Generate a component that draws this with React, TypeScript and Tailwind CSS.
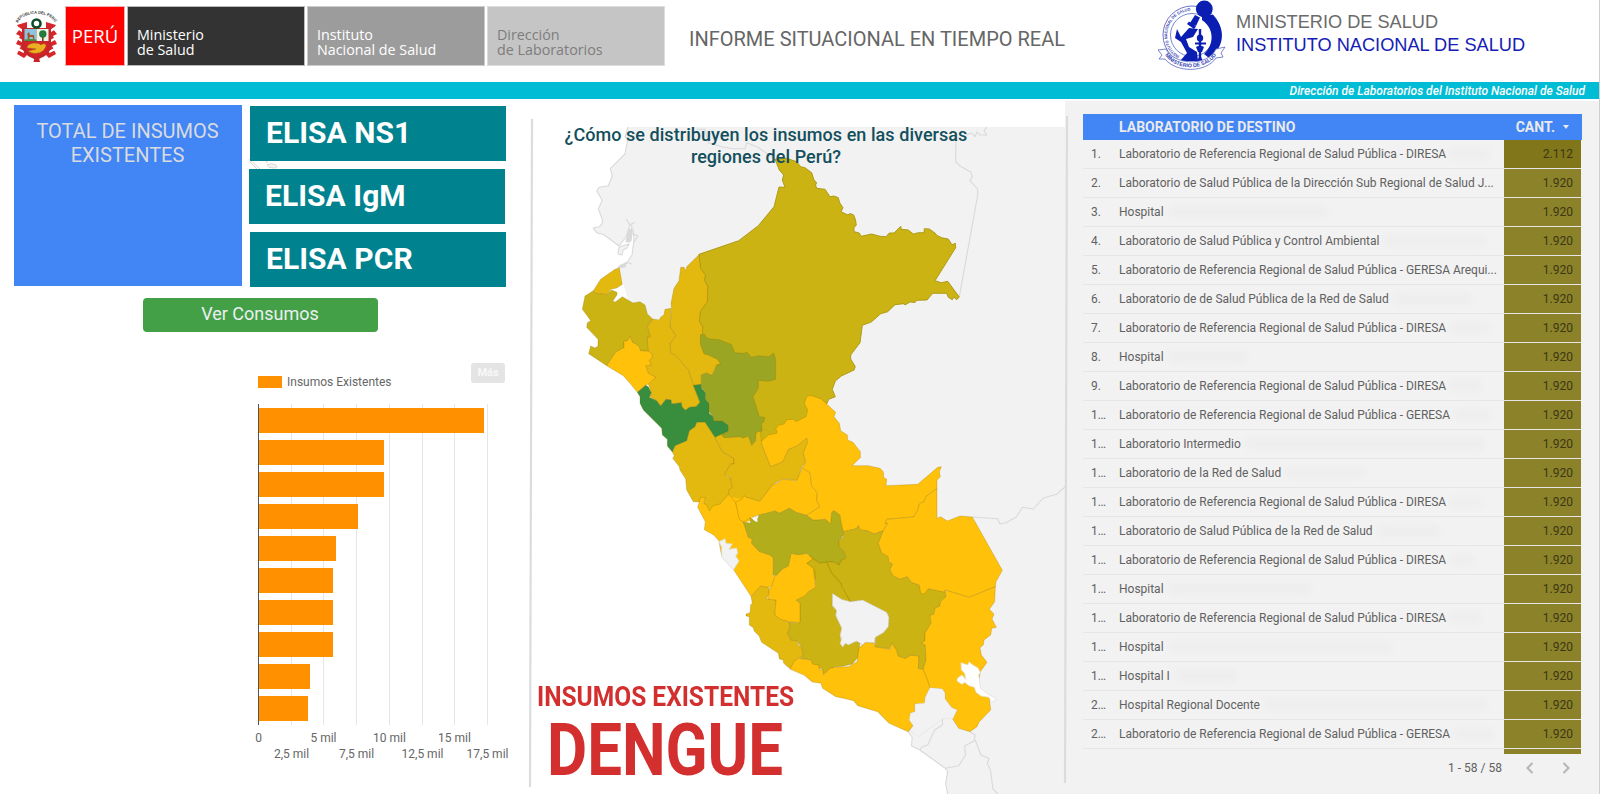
import React from "react";

const AMBER = "#e4b90f";
const YELLOW = "#ffc10a";
const OLIVE = "#cbb314";
const MOSS = "#9aa523";
const JUNIN = "#b2ae1b";
const GREEN = "#388e3c";
const LAND = "#f2f2f2";

type Region = { fill: string; points: string };

const coastSouth: Region[] = [
  { fill: AMBER, points: "333,409 362,378 385,382 388,400 380,416 408,420 405,465 447,487 450,500 443,520 453,540 470,542 475,555 485,562 490,588 470,597 452,627 440,618 430,608 430,600 418,597 415,580 405,573 365,547 357,527 343,514 340,503 328,495 328,470 318,468 318,462 330,458 332,434 337,430" },
  { fill: YELLOW, points: "266,103 287,127 300,178 310,186 325,232 337,237 335,250 357,274 390,285 400,294 400,345 405,352 396,378 385,382 362,378 333,409 278,325 245,288 240,262 237,243 222,226 193,209 196,185 173,142 182,112 197,112 190,130 200,135 208,153 220,137 240,132" },
  { fill: YELLOW, points: "287,127 305,118 312,107 322,113 360,124 397,75 412,70 428,58 470,62 488,23 510,38 515,78 532,98 530,122 540,140 500,166 470,158 448,145 418,160 405,153 380,160 355,165 332,173 310,186 298,178" },
  { fill: OLIVE, points: "480,488 480,430 468,420 505,395 527,382 525,330 500,310 518,297 540,309 560,306 575,340 603,372 632,427 610,422 578,400 576,438 588,450 587,470 605,505 600,530 607,562 620,548 660,545 655,590 637,612 610,618 585,620 550,642 545,625 530,630 515,614 515,600 480,595 490,585 485,562 470,542 453,540 443,520 450,500 447,487" },
  { fill: YELLOW, points: "453,280 475,284 500,280 518,297 500,310 520,325 527,382 505,395 495,408 468,420 480,430 480,488 447,485 422,478 405,465 408,420 385,418 388,385 396,378 405,350 428,326 445,318" },
  { fill: JUNIN, points: "310,186 332,190 330,173 350,186 357,165 380,160 405,153 418,160 448,145 470,158 500,166 520,180 557,178 572,190 575,155 583,152 602,165 603,188 612,195 610,225 597,245 597,260 610,272 619,292 602,300 597,316 580,304 540,309 500,280 475,284 453,280 445,318 428,326 408,347 400,345 400,294 390,285 357,274 335,250 337,237 325,232" },
];

const north: Region[] = [
  { fill: AMBER, points: "417,44 421,85 436,105 433,122 443,138 442,185 420,215 418,245 428,260 427,283 440,300 482,345 482,372 470,375 462,395 455,406 440,399 424,405 424,433 400,436 385,390 345,345 332,340 330,310 347,287 330,260 335,207 333,190 342,145 357,122 362,82 372,82 378,92 380,80" },
  { fill: AMBER, points: "333,205 315,208 312,224 302,232 297,240 278,237 262,260 271,290 261,292 263,332 277,342 277,352 268,360 273,375 257,377 265,400 287,412 272,425 265,432 274,458 270,470 290,482 302,498 318,478 333,480 335,492 364,488 366,500 376,511 388,502 408,500 420,487 400,436 385,390 345,345 332,340 330,310 347,287 330,260" },
  { fill: AMBER, points: "178,84 165,88 122,118 100,152 108,160 140,164 152,148 170,144 187,133" },
  { fill: OLIVE, points: "100,152 75,168 67,208 82,228 92,242 82,248 80,262 114,298 114,318 105,324 92,318 86,341 140,377 168,336 192,323 192,304 203,302 210,290 218,308 227,312 237,320 241,332 265,334 261,292 271,290 262,260 278,237 262,222 255,195 240,185 219,189 187,170 166,186 158,184 171,164 171,157 154,150 140,164 108,160" },
  { fill: YELLOW, points: "140,377 168,336 192,323 192,304 203,302 210,290 218,308 227,312 237,320 241,332 265,334 277,342 277,352 268,360 273,375 257,377 265,400 287,412 272,425 265,432 257,436 232,457 210,430 190,407" },
  { fill: AMBER, points: "337,636 345,617 380,602 388,572 405,560 410,547 435,546 465,592 487,635 522,655 522,672 512,672 494,703 503,712 512,715 517,742 506,750 506,764 483,790 455,812 443,814 430,800 435,774 422,774 420,786 400,785 380,750 377,717 360,690 358,680 338,655 343,648" },
  { fill: AMBER, points: "465,592 505,560 560,565 580,590 600,565 606,615 632,680 668,665 685,628 710,618 740,594 743,605 730,640 737,665 725,683 712,721 668,717 637,735 600,784 562,773 545,778 527,787 506,764 506,750 517,742 512,715 494,703 512,672 522,672 522,655 487,635" },
  { fill: GREEN, points: "232,457 257,436 265,440 274,458 268,472 290,482 302,498 318,478 333,480 335,492 364,488 366,500 376,511 388,502 408,500 420,487 400,436 424,433 425,445 437,458 437,478 447,490 447,520 460,530 462,543 488,543 505,555 505,574 465,592 435,546 410,547 405,560 388,572 380,602 345,617 337,636 322,618 322,598 307,585 305,565 250,510 240,490 240,470" },
  { fill: MOSS, points: "421,284 433,283 442,294 450,297 478,299 515,314 524,338 553,340 560,336 574,352 597,347 627,350 641,339 647,358 647,418 625,424 595,421 595,445 579,470 598,530 614,532 612,545 604,550 607,573 588,576 587,602 575,616 565,588 548,595 542,590 492,593 485,585 505,574 505,555 488,543 462,543 460,530 447,515 447,490 437,478 437,458 424,440 424,405 440,399 455,406 462,395 470,375 482,372 472,358 445,345 432,342 421,313" },
];

const arequipa: Region[] = [
  { fill: YELLOW, points: "755,147 768,122 780,115 815,120 822,133 838,135 842,150 852,150 852,165 870,145 900,140 925,140 950,125 955,85 968,73 975,66 1000,70 1003,80 1045,88 1050,68 1065,90 1070,108 1090,115 1105,105 1130,108 1128,145 1142,148 1155,180 1162,203 1148,232 1146,250 1118,252 1118,275 1105,280 1102,300 1113,317 1098,335 1043,310 1010,275 952,257 940,242 910,235 888,230 850,205 845,190 820,186 797,166" },
];

const east: Region[] = [
  { fill: YELLOW, points: "-174,195 -177,185 -155,165 -130,160 -130,150 -134,148 -125,136 -108,132 -100,119 -80,118 -72,125 -42,110 -37,90 -47,70 -40,50 -30,46 2,56 20,72 47,97 42,110 58,130 62,152 82,165 83,180 99,187 121,215 121,233 96,257 145,257 180,265 190,275 191,293 200,297 198,317 293,313 353,262 364,260 358,275 361,290 351,300 351,325 318,350 312,365 298,372 293,392 280,411 200,418 196,430 203,430 190,452 163,462 140,452 120,450 115,437 110,446 70,455 63,425 60,405 43,392 35,395 32,432 17,418 -20,420 -40,406 0,380 -10,362 -8,338 -25,318 -30,278 -52,265 -43,245 -50,220 -37,185 -40,174 -70,198 -95,208 -112,245 -148,260" },
  { fill: OLIVE, points: "70,455 110,446 115,437 120,450 140,452 163,462 190,452 175,490 185,518 205,530 206,545 218,552 210,570 220,588 240,597 262,590 275,607 298,615 305,642 325,626 375,635 378,650 362,664 360,678 345,685 342,703 330,705 333,730 315,760 315,782 305,790 316,795 318,840 310,868 295,865 297,828 271,825 256,835 235,828 230,810 215,788 208,806 166,800 166,772 190,758 205,740 207,712 200,697 128,660 92,665 65,620 65,610 35,578 20,545 45,547 57,556 62,545 79,532 70,512 57,500 57,485 70,470" },
  { fill: YELLOW, points: "200,418 280,411 293,392 298,372 312,365 318,350 351,325 351,415 362,410 382,423 420,408 457,411 547,571 528,605 526,620 448,652 375,630 372,636 325,626 313,642 302,640 298,615 275,607 262,590 240,597 220,588 210,570 218,552 206,545 205,530 185,518 175,490 190,452 203,430 196,430" },
  { fill: YELLOW, points: "375,630 448,652 526,620 524,665 508,688 522,702 516,717 529,742 515,745 512,765 492,780 490,795 480,803 484,825 501,847 481,875 473,920 488,945 509,945 509,965 512,990 478,1025 471,1040 450,1055 416,1045 398,1017 411,990 395,983 375,957 375,940 367,927 330,923 323,900 310,868 318,840 316,795 305,790 315,782 315,760 333,730 330,705 342,703 345,685 360,678 362,664 378,650" },
];

const LORETO =
  "775,159.3 779.3,170 783.7,175 782.3,180 785,187.3 779,187 774,206.7 758.3,225.7 738.7,240.7 699,254.3 700.3,268.3 705.3,275 704.3,280.7 707.7,286 707.3,301.7 700,311.7 699.3,321.7 702.7,326.7 702.3,334.3 730,400 761,441.7 790,434 826.7,404 828.7,399.3 835.3,396.7 832.3,389.3 835.3,381 841.3,376 854,370 855.3,366.7 850.7,359 850.7,355 860,342.7 862.3,325.3 871.3,322 880.7,313.7 887.7,311.7 895,304.7 904,303.7 905,305 910,302 915,302.5 916.7,300.3 927,300 932.7,293.3 946.7,293.3 948.3,297.3 952.3,299.7 953.7,297 956.7,299.7 959.3,297 947.7,281.3 941.3,282.7 935,280.7 955.7,247.7 955.3,243.3 952,244.7 948.3,239 941.7,237.7 936.7,235.3 935,233 929.3,229 924.3,228.7 924,232.7 918.3,232.7 913.3,234 908.3,230 901.3,229.3 900.7,226.3 894,233 889.3,233 886,236.7 880,236.3 871.7,234 861,236.3 859.3,233 854,231.7 854,227.7 856.3,225 855.5,220 853.7,215 850,213.5 848,215 841,211.7 843,207.7 839.7,202.7 838.3,197.7 834,196 830,196.7 825,189.3 816.7,188.3 815.5,185 816.7,182.7 814,180 811.7,172.7 805,167.7 800.7,166.7 796.7,161.7 786.7,158.3";

function Regions({ items, transform }: { items: Region[]; transform: string }) {
  return (
    <g transform={transform} stroke="#8a6a00" strokeOpacity="0.26" strokeWidth="3" strokeLinejoin="round">
      {items.map((r, i) => (
        <polygon key={i} points={r.points} fill={r.fill} />
      ))}
    </g>
  );
}

function PeruMap() {
  return (
    <svg className="absolute inset-0" width="540" height="695" viewBox="528 99 540 695">
      <g stroke="#d9d9d9" strokeWidth="1.1" strokeLinejoin="round">
        <path
          fill={LAND}
          stroke="none"
          d="M628,127 L625,137 626.7,143 625,154 610.3,168.7 612.3,176 608.3,185.7 599.3,187.3 596.7,191 602.3,200.3 598.3,209 602.3,219 602.3,223.3 599.3,226.7 593,228 596.7,232.7 604,234.7 619,246 626,237 630,225 634,240 632,255 626.7,263.3 619,268 625,290 640,340 660,400 690,470 750,580 800,660 880,700 908.1,731.7 912.2,737.3 911.5,746 919.8,750 945.3,768.3 947.7,771.7 945.6,783.3 947.7,794 1068,794 1068,127Z"
        />
        <path fill="none" d="M628,127 L625,137 628,139 626,148 625,154 610.3,168.7 612.3,176 608.3,185.7 599.3,187.3 596.7,191 602.3,200.3 598.3,209 602.3,219 602.3,223.3 599.3,226.7 593,228 596.7,232.7 604,234.7 619,246 626,237 630,225 626,219 M630,225 L635,222 M632,225 L629,243 M633,228 L634,240 M630,233 L638,236 634,242 M627,236 L631,240 M634,240 L632,255 626.7,263.3 618,267 M625,262 L632,264" />
        <path fill={LAND} d="M619,247 L629,244 627,248 623,250 622,255 618,254Z" />
        <path fill="#d9d9d9" d="M629,229 L632,230 631,241 626,242Z M621,265 L626,263 625,267 618,268Z" />
        <path fill="none" d="M696.7,129.3 L705,129.3 708.3,142.7 721.7,146.7 733,148.7 745,148.7 746.7,142.7 758,147.3 775,159.3" />
        <path fill="none" d="M959.3,297 L977.7,195 977.7,189 970,180.7 972.3,176.7 971,172.3 960,166 955.7,161.7 956,135 M966,135 L971.7,133 975,136.7 977,132 980,135 986.7,135 984,131 986.7,127" />
        <path fill="none" d="M972.3,517 L997.7,518.7 1000,524 1006,522.7 1016,517.3 1022.7,507.3 1033.3,509 1043.3,498 1056.7,494.3 1066,486" />
        <path fill="none" d="M908.1,731.7 L912.2,737.3 911.5,746 919.8,750 945.3,768.3 947.7,771.7 945.6,783.3 947.7,794 M952.8,719 L951,715 942.5,716.5 942.5,725 934.6,730 927.7,745 922.5,746.5 919.8,750 M970,731.7 L975.2,735 974.2,740.7 964.6,746 965.6,755 958.7,765.7 945.3,768.3 M975.2,740 L981,755 989,758.5 987.3,763.3 990.4,770 993,789 998,794" />
      </g>
      <polygon points={LORETO} fill={OLIVE} stroke="#a99510" strokeWidth="0.9" strokeLinejoin="round" />
      <Regions items={north} transform="translate(560 240) scale(.33333)" />
      <g transform="translate(640 460) scale(.33333)">
        <polygon fill={OLIVE} points="495,285 620,295 640,430 600,420 490,330" />
        <polygon fill={YELLOW} points="270,110 330,120 340,180 312,188 296,176" />
      </g>
      <Regions items={coastSouth} transform="translate(640 460) scale(.33333)" />
      <Regions items={arequipa} transform="translate(530 620) scale(.34435 .33333)" />
      <Regions items={east} transform="translate(820 380) scale(.33333)" />
      <g transform="translate(820 380) scale(.33333)" strokeWidth="2">
        <polygon fill={LAND} stroke="#c9c39a" points="37,640 65,658 92,665 128,660 200,697 207,712 205,740 190,758 166,772 163,788 135,787 128,795 110,783 85,795 75,790 68,802 60,790 65,775 60,765 65,745 47,705 50,692 37,675" />
        <polygon fill="#fff" stroke="#dcdcdc" points="423,848 444,855 447,845 455,853 473,863 481,877 476,885 481,925 509,945 530,958 514,967 507,952 483,948 468,937 463,922 447,917 434,907 426,913 411,903 412,895 426,885 437,898 434,880 424,870" />
        <polygon fill={LAND} stroke="#d9d9d9" points="330,923 367,927 375,940 375,957 395,983 411,990 398,1017 370,1015 295,1070 270,1052 280,1037 268,1020 271,1000 285,995 285,972 314,970 316,952" strokeOpacity="0.6" />
      </g>
      <g transform="translate(640 460) scale(.33333)">
        <polygon fill={LAND} stroke="#d9d9d9" strokeWidth="2" points="237,245 255,236 258,250 277,252 267,268 290,264 293,280 287,288 297,303 280,330 262,310 245,292 245,262" />
        <polygon fill="#fff" points="331,170 352,179 353,185 345,184" />
      </g>
      <g stroke="#dcdcdc" strokeWidth="2.2">
        <line x1="532" y1="119" x2="530" y2="787" />
        <line x1="1067" y1="116" x2="1065" y2="783" />
      </g>
    </svg>
  );
}

function PeruCrest() {
  return (
    <svg width="44" height="54" viewBox="14 9 44 54">
      <path id="arch" d="M18,23 C22,10.500 50,10.500 55,23" fill="none" />
      <text fontFamily="Liberation Sans" fontSize="4" fontWeight="700" fill="#333">
        <textPath href="#arch" textLength="43" lengthAdjust="spacingAndGlyphs">REPÚBLICA DEL PERÚ</textPath>
      </text>
      <path d="M17,25 L27,22 27,55 24,58 17,54 21,46 16,44 20,36 16,34 20,29Z" fill="#d7262b" />
      <path d="M56,25 L46,22 46,55 49,58 56,54 52,46 57,44 53,36 57,34 53,29Z" fill="#d7262b" />
      <path d="M18,28 L24,32 M17,38 L24,42 M18,49 L24,52 M55,28 L49,32 M56,38 L49,42 M55,49 L49,52" stroke="#fff" strokeWidth="2.4" />
      <path d="M22,28 L51,28 51,46 C50,55 43,57 36.500,60 C30,57 23,55 22,46Z" fill="#c0282b" />
      <path d="M24.500,29 H36.500 V41 H24.500Z" fill="#8cc4e0" />
      <path d="M36.500,29 H48.500 V41 H36.500Z" fill="#eef3e8" />
      <path d="M24.500,42 H48.500 V47 C47,53 42,55 36.500,57 C31,55 26,53 24.500,47Z" fill="#d5222a" />
      <path d="M27,34 l2,-2 1,3 4,0 .6,5 -1.400,0 -.5,-3 -3,0 -.6,3 -1.300,0 -.3,-5Z" fill="#a3562a" />
      <path d="M24.500,41 v-1.500 q6,-1 12,0 v1.500Z" fill="#4b8d3b" />
      <path d="M42,41 v-6 h1.600 v6Z" fill="#704623" />
      <circle cx="42.800" cy="34" r="3.700" fill="#277a3d" />
      <path d="M27,48 C27,42 39,42 41,45 C44,42 48,45 45,48 C43,54 32,55 28,51 l8,-2Z" fill="#edae21" stroke="#90561b" strokeWidth=".5" />
      <circle cx="36.500" cy="23.500" r="4" fill="#fff" stroke="#0f4a27" strokeWidth="2.600" />
      <path d="M34.500,58 h4.500 l1,4 h-6.500Z" fill="#c9232a" />
    </svg>
  );
}

function InsLogo() {
  return (
    <svg width="70" height="72" viewBox="1158 0 70 72">
      <g fill="none" stroke="#5a64c4">
        <circle cx="1192" cy="35" r="29" strokeWidth=".9" fill="#fff" />
        <circle cx="1192" cy="35" r="21.500" strokeWidth=".8" />
      </g>
      <path id="ring" d="M1179.500,56 A24.200,24.200 0 0 1 1192,10.800 L1195,10.800" fill="none" />
      <text fontFamily="Liberation Sans" fontWeight="700" fontSize="4.200" fill="#3c48b4">
        <textPath href="#ring" textLength="62" lengthAdjust="spacingAndGlyphs">INSTITUTO NACIONAL DE SALUD</textPath>
      </text>
      <path d="M1202,14 L1213,15 C1226,29 1225,47 1209,58 L1204,54 C1214,45 1215,29 1202,20Z" fill="#0a1fb2" />
      <circle cx="1204.300" cy="9" r="8.400" fill="#0a1fb2" />
      <g fill="#0a1fb2">
        <path d="M1195,15 L1200,17.500 1196,26 1190,23Z M1189,21.500 L1196,26.500 1194,29 1187,24Z" />
        <path d="M1177,29 L1181,37 1189,28 1198,29 1193,37 1186,39 1189,47 1197,52 1198,61 1180,61 1187,53 1181,42 1175,38Z" />
        <path d="M1198.800,29 h2.400 v35 h-2.400Z" />
        <ellipse cx="1200" cy="38" rx="3.200" ry="3.600" />
        <path d="M1195,42.500 h11 v2 h-11Z M1196,47 q4,-2.500 8,0 l-2,5 h-4Z M1196,63 l4,-8 4,8Z" />
      </g>
      <path d="M1158,50 L1166,49 C1172,64 1207,68 1216,49 L1225,47 1221,53 1223,57 1216,58 C1206,73 1176,73 1165,59 L1159,59 1162,55Z" fill="#fff" stroke="#5a64c4" strokeWidth=".8" />
      <path id="ribbon" d="M1165,55 C1175,71 1206,72 1217,54" fill="none" />
      <text fontFamily="Liberation Sans" fontWeight="700" fontSize="5.400" fill="#3541b4">
        <textPath href="#ribbon" textLength="59" lengthAdjust="spacingAndGlyphs">MINISTERIO DE SALUD</textPath>
      </text>
    </svg>
  );
}

const bars = [484, 384, 384, 358, 336, 333, 333, 333, 310, 308];
const ticks = [
  { x: 258.5, label: "0" },
  { x: 291.5, label: "2,5 mil" },
  { x: 323.5, label: "5 mil" },
  { x: 356.5, label: "7,5 mil" },
  { x: 389.5, label: "10 mil" },
  { x: 422.5, label: "12,5 mil" },
  { x: 454.5, label: "15 mil" },
  { x: 487.5, label: "17,5 mil" },
];

function SupplyChart() {
  return (
    <svg className="block" width="288" height="376" viewBox="240 394 288 376" fontFamily="Roboto, sans-serif" fontSize="12" fill="#666">
      {ticks.map((t, i) => (
        <g key={t.label}>
          <line x1={t.x} x2={t.x} y1="404" y2="725" stroke="#e6e6e6" />
          <text x={t.x} y={i % 2 ? 758 : 742} textAnchor="middle">{t.label}</text>
        </g>
      ))}
      {bars.map((end, i) => (
        <rect key={i} x="259" y={408 + i * 32} width={end - 259} height="25" fill="#ff9100" />
      ))}
      <line x1="258.500" x2="258.500" y1="404" y2="725" stroke="#555" />
    </svg>
  );
}

const REF = "Laboratorio de Referencia Regional de Salud Pública - ";
const rows: { name: string; smudge?: string }[] = [
  { name: REF + "DIRESA", smudge: "w-10" },
  { name: "Laboratorio de Salud Pública de la Dirección Sub Regional de Salud J..." },
  { name: "Hospital", smudge: "w-40" },
  { name: "Laboratorio de Salud Pública y Control Ambiental", smudge: "w-26" },
  { name: REF + "GERESA Arequi..." },
  { name: "Laboratorio de de Salud Pública de la Red de Salud", smudge: "w-20" },
  { name: REF + "DIRESA", smudge: "w-10" },
  { name: "Hospital", smudge: "w-20" },
  { name: REF + "DIRESA", smudge: "w-8" },
  { name: REF + "GERESA", smudge: "w-9" },
  { name: "Laboratorio Intermedio", smudge: "w-60" },
  { name: "Laboratorio de la Red de Salud", smudge: "w-20" },
  { name: REF + "DIRESA", smudge: "w-8" },
  { name: "Laboratorio de Salud Pública de la Red de Salud", smudge: "w-16" },
  { name: REF + "DIRESA", smudge: "w-6" },
  { name: "Hospital", smudge: "w-36" },
  { name: REF + "DIRESA", smudge: "w-8" },
  { name: "Hospital", smudge: "w-56" },
  { name: "Hospital I", smudge: "w-16" },
  { name: "Hospital Regional Docente", smudge: "w-56" },
  { name: REF + "GERESA", smudge: "w-10" },
];

function LabTable() {
  return (
    <div className="ml-[18px] mt-[13px] w-[499px] text-xs text-[#616161]">
      <div className="flex h-[26px] items-center bg-[#4285f4] text-sm font-bold text-[#e8eaed]">
        <span className="ml-[36px] pb-px tracking-[0.02px]">LABORATORIO DE DESTINO</span>
        <span className="ml-auto pb-px">CANT.</span>
        <span className="ml-[8px] mr-[13px] h-0 w-0 border-x-[3px] border-t-[4px] border-x-transparent border-t-[#e8eaed]" />
      </div>
      {rows.map((r, i) => (
        <div key={i} className="flex h-[29px] w-[498px] border-b border-[#e6e6e6] leading-[28px]">
          <span className="w-[36px] pl-[8px]">
            {i < 9 ? `${i + 1}.` : <>{i < 19 ? "1" : "2"}<span className="tracking-[-0.5px]">...</span></>}
          </span>
          <span className="flex flex-1 items-center whitespace-nowrap tracking-[-0.01px]">
            {r.name}
            {r.smudge && <span className={`${r.smudge} ml-1 h-3 rounded-full bg-[#eeeeee] blur-[2px]`} />}
          </span>
          <span className={`w-[77px] pr-[8px] text-right text-[#3a3714] ${i === 0 ? "bg-[#82761a]" : "bg-[#8c8229]"}`}>
            {i === 0 ? "2.112" : "1.920"}
          </span>
        </div>
      ))}
      <div className="ml-[421px] h-[5px] w-[77px] bg-[#8c8229]" />
      <div className="flex h-[28px] items-center justify-end pr-[12px]">
        <span>1 - 58 / 58</span>
        <svg className="ml-[24px]" width="8" height="12" viewBox="0 0 8 12" fill="none" stroke="#b5b5b5" strokeWidth="2">
          <path d="M6.500,1 L1.500,6 L6.500,11" />
        </svg>
        <svg className="ml-[28px]" width="8" height="12" viewBox="0 0 8 12" fill="none" stroke="#b5b5b5" strokeWidth="2">
          <path d="M1.500,1 L6.500,6 L1.500,11" />
        </svg>
      </div>
    </div>
  );
}

export default function App() {
  return (
    <div className="h-[794px] w-[1600px] overflow-hidden border-r border-[#cfcfcf] bg-white font-['Roboto',sans-serif]">
      <header className="flex h-[82px] items-start">
        <div className="ml-[14px] mt-[9px]"><PeruCrest /></div>
        <div className="ml-[7px] mt-[6px] flex h-[60px] gap-[2px] font-['Open_Sans',sans-serif] text-[14.3px] leading-[15px]">
          <div className="w-[60px] border border-[#f3b0b0] bg-[#ff0000] pt-[18px] text-center text-[18.5px] leading-[22px] text-white">PERÚ</div>
          <div className="w-[178px] border border-[#bbb] bg-[#333] pl-[9px] pt-[20px] text-white">Ministerio<br />de Salud</div>
          <div className="w-[178px] border border-[#ccc] bg-[#9c9c9c] pl-[9px] pt-[20px] text-white">Instituto<br />Nacional de Salud</div>
          <div className="w-[178px] border border-[#ddd] bg-[#c5c5c5] pl-[9px] pt-[20px] text-[#7d7d7d]">Dirección<br />de Laboratorios</div>
        </div>
        <div className="ml-[24px] mt-[27px] w-[376px] whitespace-nowrap text-xl leading-[24px] text-[#666]">INFORME SITUACIONAL EN TIEMPO REAL</div>
        <div className="ml-[93px]"><InsLogo /></div>
        <div className="ml-[8px] mt-[11px] whitespace-nowrap font-['Liberation_Sans',sans-serif] text-[18.2px] leading-[22.500px]">
          <div className="text-[#6b6b6b]">MINISTERIO DE SALUD</div>
          <div className="text-[#1420b5]">INSTITUTO NACIONAL DE SALUD</div>
        </div>
      </header>
      <div className="flex h-[17px] items-center justify-end bg-[#00bcd4] pr-[14px] text-xs font-medium italic text-white">
        Dirección de Laboratorios del Instituto Nacional de Salud
      </div>
      <main className="flex h-[695px]">
        <section className="relative w-[528px]">
          <svg className="absolute left-[249px] top-[58px]" width="32" height="14" viewBox="0 0 32 14" fill={LAND} stroke="#d9d9d9">
            <path d="M-1,1 L11,12 M0,4 L8,12" />
            <path d="M18,8 q4,-3 9,0 q3,3 -3,3 q-5,0 -6,-3Z M15,2 q4,1 3,4" />
          </svg>
          <div className="relative flex pl-[14px] pt-[6px]">
            <div className="h-[181px] w-[228px] bg-[#4285f4] pr-px pt-[14px] text-center text-xl leading-[24px] text-[#d8dbe0]">
              TOTAL DE INSUMOS<br />EXISTENTES
            </div>
            <div className="ml-[7px] mt-px flex flex-col gap-2 text-3xl font-bold leading-[54px] tracking-[0.06px] text-white">
              <div className="ml-px h-[55px] w-[256px] bg-[#00838f] pl-[16px]">ELISA NS1</div>
              <div className="h-[55px] w-[256px] bg-[#00838f] pl-[16px]">ELISA IgM</div>
              <div className="ml-px h-[55px] w-[256px] bg-[#00838f] pl-[16px]">ELISA PCR</div>
            </div>
          </div>
          <button className="ml-[143px] mt-[11px] block h-[34px] w-[235px] rounded bg-[#43a047] pb-[2px] pr-px text-lg leading-[32px] text-[#eceff1]">Ver Consumos</button>
          <div className="mt-[31px] flex h-[31px] items-start pl-[258px]">
            <span className="mt-[13px] h-3 w-6 bg-[#ff9100]" />
            <span className="ml-[5px] mt-[11px] text-xs text-[#666]">Insumos Existentes</span>
            <span className="ml-auto mr-[23px] h-5 w-[34px] rounded-[3px] bg-[#e4e4e4] text-center text-[11px] font-bold leading-[19px] text-[#f8f8f8]">Más</span>
          </div>
          <div className="pl-[240px]"><SupplyChart /></div>
        </section>
        <section className="relative w-[537px]">
          <PeruMap />
          <div className="relative flex h-full flex-col items-center">
            <h1 className="mr-[61px] mt-[25px] text-center text-lg font-medium leading-[22px] tracking-[0.05px] text-[#134f5c]">
              ¿Cómo se distribuyen los insumos en las diversas<br />regiones del Perú?
            </h1>
            <div className="mt-auto w-full pb-[4px] pl-[9px]">
              <div className="w-max origin-left scale-x-[0.876] text-[28px] font-bold leading-[32px] text-[#d32f2f]">INSUMOS EXISTENTES</div>
              <div className="ml-[10px] w-max origin-left scale-x-[0.858] pb-[1px] text-[72px] font-bold leading-[76px] text-[#d32f2f]">DENGUE</div>
            </div>
          </div>
        </section>
        <section className="relative mt-[2px] h-[693px] w-[534px] bg-[#f2f2f2]">
          <svg className="absolute left-0 top-0" width="4" height="693" viewBox="1065 101 4 693">
            <line x1="1067" y1="116" x2="1065" y2="783" stroke="#dcdcdc" strokeWidth="2.200" />
          </svg>
          <LabTable />
        </section>
      </main>
    </div>
  );
}
